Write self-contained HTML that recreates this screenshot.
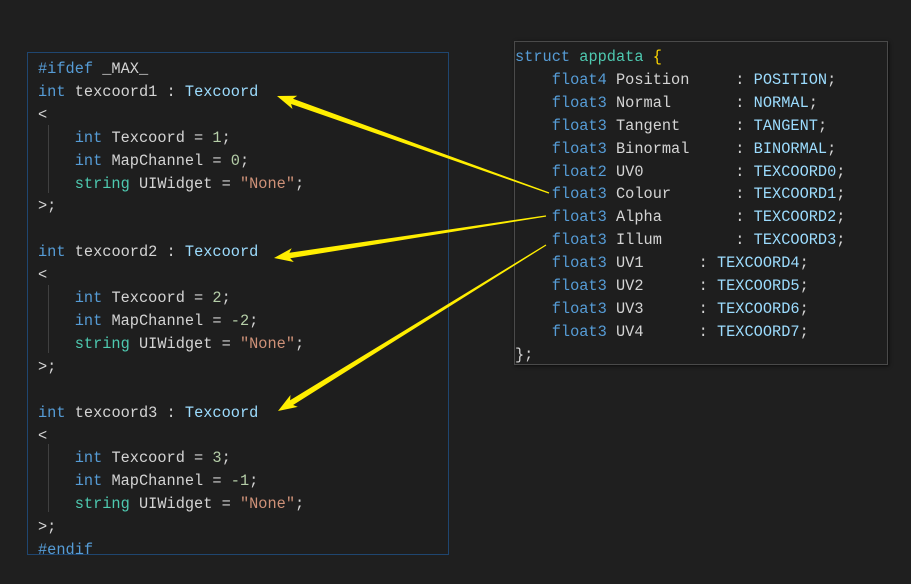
<!DOCTYPE html>
<html><head><meta charset="utf-8"><style>
body{margin:0;width:911px;height:584px;background:#1f1f1f;overflow:hidden;position:relative;font-family:"Liberation Mono","DejaVu Sans Mono",monospace;font-size:15.3px;}
.p{position:absolute;background:#1e1e1e;white-space:pre;line-height:22.9px;color:#d4d4d4}
#l{left:27px;top:52px;width:422px;height:503px;border:1px solid #1f4670;box-sizing:border-box;padding:5px 0 0 10px}
#r{left:514px;top:41px;width:374px;height:324px;border:1px solid #4a4a4a;box-sizing:border-box;padding:4px 0 0 0;box-shadow:1px 1px 3px #0c0c0c}
.k{color:#569cd6}.t{color:#9cdcfe}.s{color:#4ec9b0}.q{color:#ce9178}.n{color:#b5cea8}.y{color:#ffd700}
.g{position:absolute;left:48px;width:1px;background:#404040}
</style></head><body>
<div class="p" id="l"><span class="k">#ifdef</span> _MAX_
<span class="k">int</span> texcoord1 : <span class="t">Texcoord</span>
&lt;
    <span class="k">int</span> Texcoord = <span class="n">1</span>;
    <span class="k">int</span> MapChannel = <span class="n">0</span>;
    <span class="s">string</span> UIWidget = <span class="q">"None"</span>;
&gt;;

<span class="k">int</span> texcoord2 : <span class="t">Texcoord</span>
&lt;
    <span class="k">int</span> Texcoord = <span class="n">2</span>;
    <span class="k">int</span> MapChannel = <span class="n">-2</span>;
    <span class="s">string</span> UIWidget = <span class="q">"None"</span>;
&gt;;

<span class="k">int</span> texcoord3 : <span class="t">Texcoord</span>
&lt;
    <span class="k">int</span> Texcoord = <span class="n">3</span>;
    <span class="k">int</span> MapChannel = <span class="n">-1</span>;
    <span class="s">string</span> UIWidget = <span class="q">"None"</span>;
&gt;;
<span class="k">#endif</span></div>
<div class="g" style="top:125px;height:68px"></div>
<div class="g" style="top:285px;height:68px"></div>
<div class="g" style="top:444px;height:68px"></div>
<div class="p" id="r"><span class="k">struct</span> <span class="s">appdata</span> <span class="y">{</span>
    <span class="k">float4</span> Position     : <span class="t">POSITION</span>;
    <span class="k">float3</span> Normal       : <span class="t">NORMAL</span>;
    <span class="k">float3</span> Tangent      : <span class="t">TANGENT</span>;
    <span class="k">float3</span> Binormal     : <span class="t">BINORMAL</span>;
    <span class="k">float2</span> UV0          : <span class="t">TEXCOORD0</span>;
    <span class="k">float3</span> Colour       : <span class="t">TEXCOORD1</span>;
    <span class="k">float3</span> Alpha        : <span class="t">TEXCOORD2</span>;
    <span class="k">float3</span> Illum        : <span class="t">TEXCOORD3</span>;
    <span class="k">float3</span> UV1      : <span class="t">TEXCOORD4</span>;
    <span class="k">float3</span> UV2      : <span class="t">TEXCOORD5</span>;
    <span class="k">float3</span> UV3      : <span class="t">TEXCOORD6</span>;
    <span class="k">float3</span> UV4      : <span class="t">TEXCOORD7</span>;
};</div>
<svg id="a" width="911" height="584" style="position:absolute;left:0;top:0" fill="#ffee00"></svg>
<script>
var A=[[549,193,277,96],[546,216,274,258],[546,245,278,411]],s='';
A.forEach(function(a){var dx=a[2]-a[0],dy=a[3]-a[1],L=Math.hypot(dx,dy),ux=dx/L,uy=dy/L,px=-uy,py=ux;
function P(t,w){return (a[0]+ux*t+px*w).toFixed(1)+','+(a[1]+uy*t+py*w).toFixed(1)}
var h=L-16;
s+='<polygon points="'+[P(0,0.6),P(h,2.8),P(h-3,7),P(L,0),P(h-3,-7),P(h,-2.8),P(0,-0.6)].join(' ')+'"/>';});
document.getElementById('a').innerHTML=s;
</script>
</body></html>
